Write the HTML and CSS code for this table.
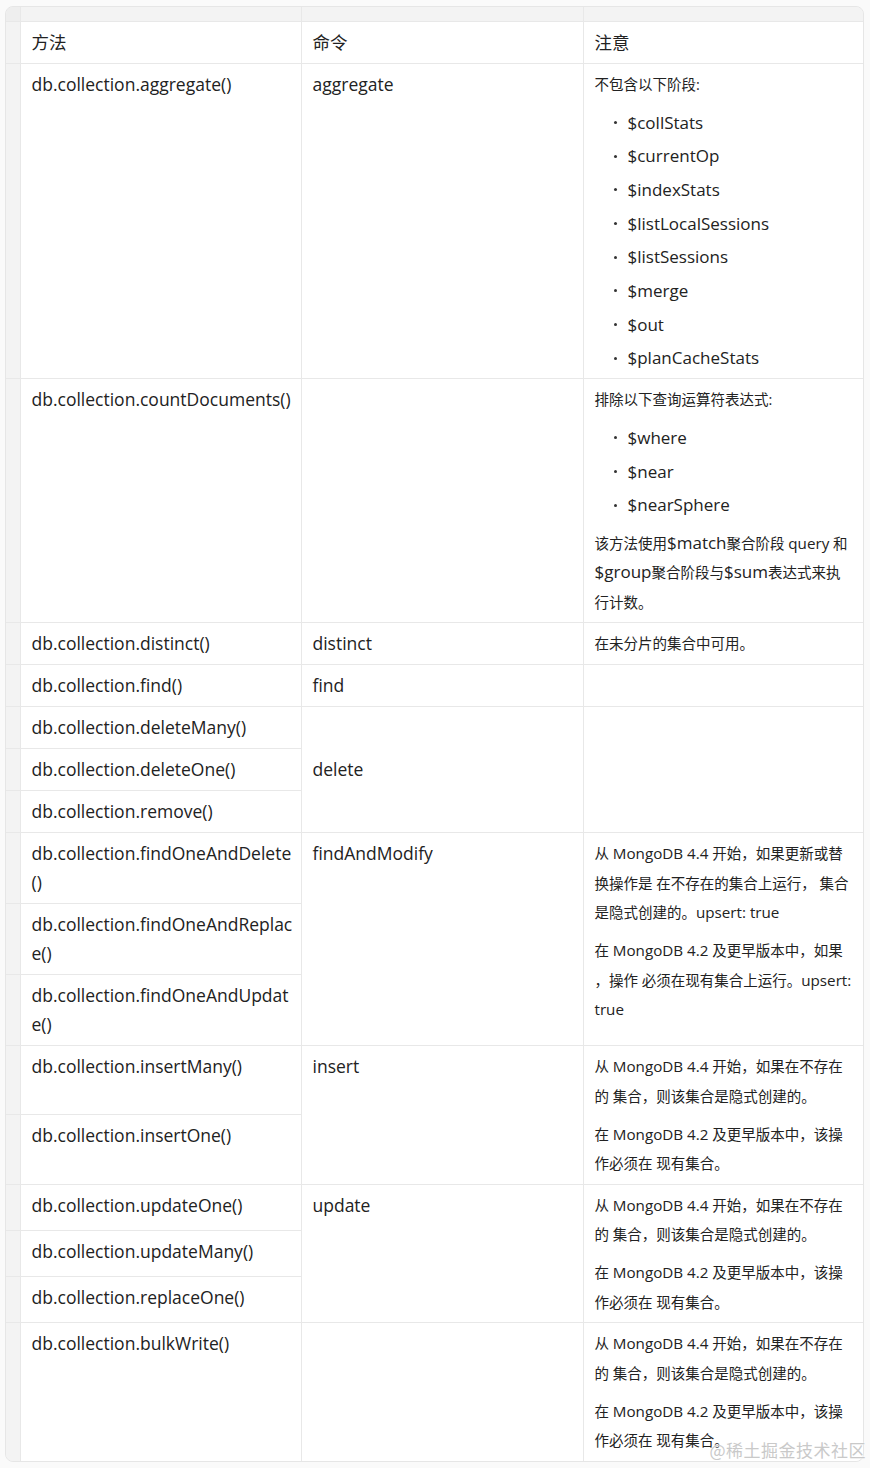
FILE: index.html
```html
<!DOCTYPE html>
<html lang="zh-CN">
<head>
<meta charset="utf-8">
<title>MongoDB 方法与命令</title>
<link rel="stylesheet" href="styles.css">
</head>
<body>
<div class="page">
  <div class="frame">
    <table class="grid">
      <colgroup>
        <col class="c-gut"><col class="c1"><col class="c2"><col class="c3">
      </colgroup>
      <tr class="handles"><td class="corner"></td><td></td><td></td><td class="last"></td></tr>
      <tr class="head"><td class="gut"></td><th class="m">方法</th><th class="m">命令</th><th class="m last">注意</th></tr>

      <tr>
        <td class="gut"></td>
        <td class="m">db.collection.aggregate()</td>
        <td class="m">aggregate</td>
        <td class="note last">
          <p>不包含以下阶段:</p>
          <ul>
            <li>$collStats</li>
            <li>$currentOp</li>
            <li>$indexStats</li>
            <li>$listLocalSessions</li>
            <li>$listSessions</li>
            <li>$merge</li>
            <li>$out</li>
            <li>$planCacheStats</li>
          </ul>
        </td>
      </tr>

      <tr>
        <td class="gut"></td>
        <td class="m">db.collection.countDocuments()</td>
        <td class="m"></td>
        <td class="note last">
          <p>排除以下查询运算符表达式:</p>
          <ul>
            <li>$where</li>
            <li>$near</li>
            <li>$nearSphere</li>
          </ul>
          <p>该方法使用<span class="op">$match</span>聚合阶段 <span class="en">query</span> 和<br><span class="op">$group</span>聚合阶段与<span class="op">$sum</span>表达式来执<br>行计数。</p>
        </td>
      </tr>

      <tr>
        <td class="gut"></td>
        <td class="m">db.collection.distinct()</td>
        <td class="m">distinct</td>
        <td class="note last"><p>在未分片的集合中可用。</p></td>
      </tr>

      <tr>
        <td class="gut"></td>
        <td class="m">db.collection.find()</td>
        <td class="m">find</td>
        <td class="note last"></td>
      </tr>

      <tr>
        <td class="gut"></td>
        <td class="m">db.collection.deleteMany()</td>
        <td class="m mid" rowspan="3">delete</td>
        <td class="note last" rowspan="3"></td>
      </tr>
      <tr>
        <td class="gut"></td>
        <td class="m">db.collection.deleteOne()</td>
      </tr>
      <tr>
        <td class="gut"></td>
        <td class="m">db.collection.remove()</td>
      </tr>

      <tr>
        <td class="gut"></td>
        <td class="m">db.collection.findOneAndDelete<br>()</td>
        <td class="m" rowspan="3">findAndModify</td>
        <td class="note last" rowspan="3">
          <p>从 <span class="en">MongoDB 4.4</span> 开始，如果更新或替<br>换操作是 在不存在的集合上运行， 集合<br>是隐式创建的。<span class="en">upsert: true</span></p>
          <p>在 <span class="en">MongoDB 4.2</span> 及更早版本中，如果<br>，操作 必须在现有集合上运行。<span class="en">upsert:</span><br><span class="en">true</span></p>
        </td>
      </tr>
      <tr>
        <td class="gut"></td>
        <td class="m">db.collection.findOneAndReplac<br>e()</td>
      </tr>
      <tr>
        <td class="gut"></td>
        <td class="m">db.collection.findOneAndUpdat<br>e()</td>
      </tr>

      <tr>
        <td class="gut"></td>
        <td class="m">db.collection.insertMany()</td>
        <td class="m" rowspan="2">insert</td>
        <td class="note last" rowspan="2">
          <p>从 <span class="en">MongoDB 4.4</span> 开始，如果在不存在<br>的 集合，则该集合是隐式创建的。</p>
          <p>在 <span class="en">MongoDB 4.2</span> 及更早版本中，该操<br>作必须在 现有集合。</p>
        </td>
      </tr>
      <tr>
        <td class="gut"></td>
        <td class="m">db.collection.insertOne()</td>
      </tr>

      <tr>
        <td class="gut"></td>
        <td class="m">db.collection.updateOne()</td>
        <td class="m" rowspan="3">update</td>
        <td class="note last" rowspan="3">
          <p>从 <span class="en">MongoDB 4.4</span> 开始，如果在不存在<br>的 集合，则该集合是隐式创建的。</p>
          <p>在 <span class="en">MongoDB 4.2</span> 及更早版本中，该操<br>作必须在 现有集合。</p>
        </td>
      </tr>
      <tr>
        <td class="gut"></td>
        <td class="m">db.collection.updateMany()</td>
      </tr>
      <tr>
        <td class="gut"></td>
        <td class="m">db.collection.replaceOne()</td>
      </tr>

      <tr class="final">
        <td class="gut"></td>
        <td class="m">db.collection.bulkWrite()</td>
        <td class="m"></td>
        <td class="note last">
          <p>从 <span class="en">MongoDB 4.4</span> 开始，如果在不存在<br>的 集合，则该集合是隐式创建的。</p>
          <p>在 <span class="en">MongoDB 4.2</span> 及更早版本中，该操<br>作必须在 现有集合。</p>
        </td>
      </tr>
    </table>
  </div>
  <div class="watermark">@稀土掘金技术社区</div>
</div>
</body>
</html>
```

FILE: styles.css
```css
html, body {
  margin: 0;
  padding: 0;
  background: #fafafa;
}

body {
  padding: 6px 0 0 5px;
  color: #222;
  font-family: "Open Sans", "Noto Sans CJK SC", sans-serif;
}

.page {
  position: relative;
  width: 865px;
}

.frame {
  box-sizing: border-box;
  width: 859px;
  border: 1px solid #e6e6e6;
  border-radius: 8px;
  background: #f3f3f3;
  overflow: hidden;
}

.grid {
  border-collapse: collapse;
  table-layout: fixed;
  width: 857px;
}

.c-gut { width: 14px; }
.c1 { width: 281px; }
.c2 { width: 282px; }
.c3 { width: 280px; }

.grid td,
.grid th {
  border: 1px solid #e8e8e8;
  background: #fff;
  vertical-align: top;
  text-align: left;
  font-weight: normal;
  white-space: nowrap;
}

.grid .gut,
.grid .corner {
  background: #f3f3f3;
  border-left: none;
  padding: 0;
}

.handles td {
  height: 14px;
  padding: 0;
  background: #f3f3f3;
  border-top: none;
}

.handles .corner {
  background: #eeeeee;
}

.grid .last {
  border-right: none;
}

.final td {
  border-bottom: none;
}

.m {
  font-size: 17.5px;
  line-height: 29px;
  padding: 6px 11px;
}

.grid .mid {
  vertical-align: middle;
}

.note {
  font-size: 14.5px;
  line-height: 29.5px;
  padding: 6px 11px 5px;
}

.note p {
  margin: 0;
}

.note p + p,
.note ul + p {
  margin-top: 8.5px;
}

.note ul {
  list-style: none;
  margin: 8px 0 0;
  padding: 0;
}

.note li {
  display: flex;
  align-items: center;
  font-size: 17px;
  line-height: 30px;
}

.note li + li {
  margin-top: 3.7px;
}

.note li::before {
  content: "";
  width: 3px;
  height: 3px;
  border-radius: 50%;
  background: #333;
  margin: 0 11px 0 19px;
  flex: none;
}

.op {
  font-size: 17px;
  line-height: 1;
}

.en {
  font-size: 15.2px;
  line-height: 1;
}

.watermark {
  position: absolute;
  right: 4px;
  bottom: 2px;
  font-family: "Noto Sans CJK SC", sans-serif;
  font-size: 17px;
  line-height: 20px;
  color: #c9c9c9;
  text-shadow: 0 0 1px #fff, 0 0 2px #fff;
  letter-spacing: 0.5px;
}
```
